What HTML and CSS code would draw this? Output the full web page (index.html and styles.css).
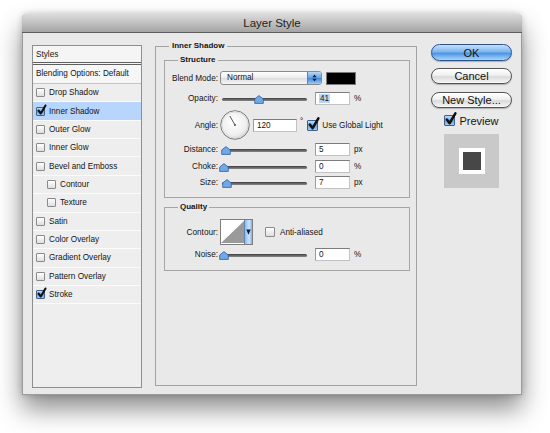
FILE: index.html
```html
<!DOCTYPE html>
<html lang="en">

<head>
    <meta charset="UTF-8">
    <title>Layer Style</title>
    <link rel="stylesheet" href="styles.css">
</head>

<body>
    <div class="window">
        <div class="titlebar">Layer Style</div>
        <div class="content">

            <div class="styles">
                <div class="styles-head">Styles</div>
                <div class="styles-blend">Blending Options: Default</div>
                <ul class="effects">
                    <li><span class="cb"></span>Drop Shadow</li>
                    <li class="selected"><span class="cb on"><svg viewBox="0 0 9 9"><path d="M1.5 4.5 L3.8 7.5 L8.5 -0.5" /></svg></span>Inner Shadow</li>
                    <li><span class="cb"></span>Outer Glow</li>
                    <li><span class="cb"></span>Inner Glow</li>
                    <li><span class="cb"></span>Bevel and Emboss</li>
                    <li class="sub"><span class="cb"></span>Contour</li>
                    <li class="sub"><span class="cb"></span>Texture</li>
                    <li><span class="cb"></span>Satin</li>
                    <li><span class="cb"></span>Color Overlay</li>
                    <li><span class="cb"></span>Gradient Overlay</li>
                    <li><span class="cb"></span>Pattern Overlay</li>
                    <li><span class="cb on"><svg viewBox="0 0 9 9"><path d="M1.5 4.5 L3.8 7.5 L8.5 -0.5" /></svg></span>Stroke</li>
                </ul>
            </div>

            <fieldset class="panel">
                <legend>Inner Shadow</legend>

                <fieldset class="group structure">
                    <legend>Structure</legend>

                    <div class="row row-blend">
                        <span class="lbl">Blend Mode:</span>
                        <div class="popup">
                            <span class="popup-text">Normal</span>
                            <span class="popup-arrows">
                                <svg viewBox="0 0 13 14"><path d="M4 6 L6.5 3 L9 6 Z M4 8 L6.5 11 L9 8 Z" /></svg>
                            </span>
                        </div>
                        <span class="swatch"></span>
                    </div>

                    <div class="row row-opacity">
                        <span class="lbl">Opacity:</span>
                        <div class="slider"><svg class="knob" style="left:41%" viewBox="0 0 10 9"><path d="M5 0.6 L9.3 4 V8.4 H0.7 V4 Z" /></svg></div>
                        <span class="field"><span class="sel">41</span></span>
                        <span class="unit">%</span>
                    </div>

                    <div class="row row-angle">
                        <span class="lbl">Angle:</span>
                        <svg class="dial" viewBox="0 0 30 30">
                            <defs>
                                <radialGradient id="dialfill" cx="45%" cy="40%" r="65%">
                                    <stop offset="0" stop-color="#ffffff" />
                                    <stop offset="0.7" stop-color="#eeeeee" />
                                    <stop offset="1" stop-color="#c9c9c9" />
                                </radialGradient>
                            </defs>
                            <circle cx="15" cy="15" r="14.3" fill="url(#dialfill)" stroke="#7c7c7c" />
                            <circle cx="15" cy="15" r="13" fill="none" stroke="#dcdcdc" />
                            <line x1="15" y1="15" x2="9.8" y2="6" stroke="#555" stroke-width="1" />
                            <circle cx="15" cy="15" r="1" fill="#555" />
                        </svg>
                        <span class="field field-wide">120</span>
                        <span class="deg">°</span>
                        <span class="cb cb-big on"><svg viewBox="0 0 9 9"><path d="M1.5 4.5 L3.8 7.5 L8.5 -0.5" /></svg></span>
                        <span class="cb-text">Use Global Light</span>
                    </div>

                    <div class="row row-distance">
                        <span class="lbl">Distance:</span>
                        <div class="slider"><svg class="knob" style="left:2%" viewBox="0 0 10 9"><path d="M5 0.6 L9.3 4 V8.4 H0.7 V4 Z" /></svg></div>
                        <span class="field">5</span>
                        <span class="unit">px</span>
                    </div>

                    <div class="row row-choke">
                        <span class="lbl">Choke:</span>
                        <div class="slider"><svg class="knob" style="left:0%" viewBox="0 0 10 9"><path d="M5 0.6 L9.3 4 V8.4 H0.7 V4 Z" /></svg></div>
                        <span class="field">0</span>
                        <span class="unit">%</span>
                    </div>

                    <div class="row row-size">
                        <span class="lbl">Size:</span>
                        <div class="slider"><svg class="knob" style="left:4%" viewBox="0 0 10 9"><path d="M5 0.6 L9.3 4 V8.4 H0.7 V4 Z" /></svg></div>
                        <span class="field">7</span>
                        <span class="unit">px</span>
                    </div>
                </fieldset>

                <fieldset class="group quality">
                    <legend>Quality</legend>

                    <div class="row row-contour">
                        <span class="lbl">Contour:</span>
                        <div class="curve">
                            <svg class="curve-pic" viewBox="0 0 25 24"><polygon points="0,24 25,0 25,24" /></svg>
                            <span class="curve-arrow"><svg viewBox="0 0 8 24"><path d="M1.5 9 H6.5 L4 15 Z" /></svg></span>
                        </div>
                        <span class="cb cb-aa"></span>
                        <span class="cb-text">Anti-aliased</span>
                    </div>

                    <div class="row row-noise">
                        <span class="lbl">Noise:</span>
                        <div class="slider"><svg class="knob" style="left:0%" viewBox="0 0 10 9"><path d="M5 0.6 L9.3 4 V8.4 H0.7 V4 Z" /></svg></div>
                        <span class="field">0</span>
                        <span class="unit">%</span>
                    </div>
                </fieldset>
            </fieldset>

            <div class="actions">
                <button type="button" class="btn btn-ok">OK</button>
                <button type="button" class="btn btn-cancel">Cancel</button>
                <button type="button" class="btn btn-new">New Style...</button>
                <label class="preview-check"><span class="cb cb-big on"><svg viewBox="0 0 9 9"><path d="M1.5 4.5 L3.8 7.5 L8.5 -0.5" /></svg></span>Preview</label>
                <div class="preview">
                    <div class="preview-tile"><div class="preview-core"></div></div>
                </div>
            </div>

        </div>
    </div>
</body>

</html>
```

FILE: styles.css
```css
html {
    background-color: #ffffff;
}

body {
    margin: 0;
    padding-bottom: 40px;
    min-height: 433px;
    box-sizing: border-box;
    font-family: "Liberation Sans", Arial, sans-serif;
    font-size: 8.2px;
    color: #141414;
}

.window {
    margin: 14px 0 0 22px;
    width: 500px;
    height: 381px;
    box-sizing: border-box;
    border: 1px solid #9a9a9a;
    border-top: none;
    border-radius: 5px 5px 0 0;
    background-color: #e9e9e9;
    box-shadow: 0 14px 26px rgba(0, 0, 0, 0.45), 0 0 6px rgba(0, 0, 0, 0.2);
}

.titlebar {
    height: 18px;
    line-height: 18px;
    margin: 0 -1px;
    text-align: center;
    font-size: 11.5px;
    color: #222;
    border-radius: 5px 5px 0 0;
    border-bottom: 1px solid #5e5e5e;
    background: linear-gradient(#dcdcdc, #bdbdbd 55%, #a4a4a4);
}

.content {
    display: flex;
    align-items: flex-start;
    padding: 0 9px;
}

/* left list of styles */

.styles {
    margin-top: 12px;
    width: 110px;
    height: 343px;
    box-sizing: border-box;
    border: 1px solid #8e8e8e;
    background-color: #eeeeee;
}

.styles-head {
    height: 16px;
    line-height: 17px;
    padding-left: 3px;
    background-color: #f5f5f5;
    border-bottom: 3px double #5f5f5f;
}

.styles-blend {
    height: 18px;
    line-height: 18px;
    padding-left: 3px;
    background-color: #f6f6f6;
    border-bottom: 1px solid #c4c4c4;
}

.effects {
    list-style: none;
    margin: 0;
    padding: 0;
}

.effects li {
    display: flex;
    align-items: center;
    height: 17.36px;
    padding-left: 3px;
    border-bottom: 1px solid #fbfbfb;
}

.effects li.sub {
    padding-left: 14px;
}

.effects li.selected {
    background-color: #b7d5fd;
}

.cb {
    flex: none;
    position: relative;
    width: 9px;
    height: 9px;
    margin-right: 4px;
    box-sizing: border-box;
    border: 1px solid #8a8a8a;
    border-radius: 1px;
    background: linear-gradient(#ffffff, #dedede);
}

.cb.on {
    border-color: #3f5f8c;
    background: linear-gradient(#c4ddf7, #6aa5e4 55%, #9fcaf5);
}

.cb svg {
    position: absolute;
    left: 0;
    top: -2px;
    width: 9px;
    height: 9px;
    overflow: visible;
}

.cb svg path {
    fill: none;
    stroke: #111;
    stroke-width: 2.1;
    stroke-linecap: round;
    stroke-linejoin: round;
}

.cb-big {
    width: 11px;
    height: 11px;
}

.cb-big svg {
    width: 11px;
    height: 11px;
}

/* middle panel */

.panel {
    margin: 8px 0 0 13px;
    width: 262px;
    height: 345px;
    box-sizing: border-box;
    padding: 4px 6px 0 8px;
    border: 1px solid #a3a3a3;
}

.panel > legend {
    margin-left: 5px;
    padding: 0 3px;
    font-weight: bold;
    font-size: 8px;
    line-height: 10px;
}

.group {
    margin: 0;
    padding: 0 0 8px 0;
    border: 1px solid #a6a6a6;
}

.group > legend {
    margin-left: 13px;
    padding: 0 2px;
    font-weight: bold;
    font-size: 8px;
    line-height: 10px;
}

.quality {
    margin-top: 4px;
    padding-bottom: 9px;
}

.row {
    display: flex;
    align-items: center;
}

.lbl {
    flex: none;
    width: 53px;
    margin-right: 4px;
    text-align: right;
    white-space: nowrap;
}

.row-blend { height: 14px; margin-top: 6px; }
.row-opacity { height: 13px; margin-top: 7px; }
.row-angle { height: 30px; margin-top: 5px; }
.row-distance { height: 13px; margin-top: 3px; }
.row-choke { height: 13px; margin-top: 4px; }
.row-size { height: 13px; margin-top: 3px; }
.row-contour { height: 26px; margin-top: 7px; }
.row-noise { height: 13px; margin-top: 3px; }

.popup {
    display: flex;
    width: 102px;
    height: 14px;
    box-sizing: border-box;
    margin-left: -2px;
    border: 1px solid #8a8a8a;
    border-radius: 3px;
    background: linear-gradient(#ffffff, #ececec 50%, #dcdcdc 52%, #f6f6f6);
}

.popup-text {
    flex: 1;
    padding-left: 6px;
    line-height: 12px;
}

.popup-arrows {
    width: 13px;
    border-left: 1px solid #5d82b6;
    border-radius: 0 2px 2px 0;
    background: linear-gradient(#bcd9f6, #5f9fe6 50%, #3f86dc 52%, #9ccbf6);
}

.popup-arrows svg {
    display: block;
    width: 13px;
    height: 12px;
}

.popup-arrows path {
    fill: #10233f;
}

.swatch {
    width: 28px;
    height: 11px;
    margin-left: 4px;
    background-color: #000;
    border: 1px solid #7a7a7a;
}

.slider {
    position: relative;
    flex: none;
    width: 85px;
    height: 12px;
    margin-right: 8px;
}

.slider::before {
    content: "";
    position: absolute;
    left: 0;
    right: 0;
    top: 5px;
    height: 3px;
    border-radius: 2px;
    background: linear-gradient(#3e3e3e, #8a8a8a);
}

.knob {
    position: absolute;
    top: 2px;
    width: 10px;
    height: 9px;
    margin-left: -3px;
}

.knob path {
    fill: #6fa9ea;
    stroke: #2f5f9e;
    stroke-width: 0.8;
    stroke-linejoin: round;
}

.field {
    flex: none;
    width: 35px;
    height: 13px;
    box-sizing: border-box;
    padding-left: 3px;
    line-height: 11px;
    background-color: #fff;
    border: 1px solid;
    border-color: #7c7c7c #c2c2c2 #c2c2c2 #9c9c9c;
}

.sel {
    background-color: #b5d5fd;
    padding: 0 1px;
}

.unit {
    margin-left: 4px;
}

.dial {
    flex: none;
    width: 30px;
    height: 30px;
    margin-left: -2px;
}

.field-wide {
    width: 44px;
    margin-left: 3px;
}

.deg {
    align-self: flex-start;
    margin: 7px 0 0 3px;
}

.row-angle .cb {
    margin-left: 4px;
}

.cb-text {
    white-space: nowrap;
}

.curve {
    display: flex;
    width: 33px;
    height: 26px;
    box-sizing: border-box;
    margin-left: -2px;
    border: 1px solid #7e7e7e;
    background-color: #fff;
}

.curve-pic {
    width: 24px;
    height: 24px;
}

.curve-pic polygon {
    fill: #9a9a9a;
}

.curve-arrow {
    width: 7px;
    border-left: 1px solid #5d82b6;
    background: linear-gradient(90deg, #8bbcf0, #cfe5fb 60%, #7fb3ec);
}

.curve-arrow svg {
    display: block;
    width: 7px;
    height: 24px;
}

.curve-arrow path {
    fill: #0d1a2e;
}

.cb-aa {
    width: 10px;
    height: 10px;
    margin-left: 12px;
    margin-right: 5px;
}

/* right column */

.actions {
    display: flex;
    flex-direction: column;
    align-items: center;
    width: 81px;
    margin: 11px 0 0 14px;
}

.btn {
    width: 81px;
    height: 16px;
    padding: 0;
    font-family: "Liberation Sans", Arial, sans-serif;
    font-size: 11px;
    color: #111;
    border: 1px solid #555;
    border-radius: 9px;
    background: linear-gradient(#ffffff, #f0f0f0 45%, #dadada 55%, #f7f7f7);
    box-shadow: 0 1px 1px rgba(0, 0, 0, 0.25);
}

.btn-ok {
    height: 17px;
    border-color: #2b528c;
    background: linear-gradient(#c5e0fb, #7fb6ef 45%, #4c96e4 55%, #a8d5fb);
}

.btn-cancel {
    margin-top: 7px;
}

.btn-new {
    margin-top: 8px;
}

.preview-check {
    display: flex;
    align-items: center;
    height: 11px;
    margin-top: 7px;
    font-size: 11px;
}

.preview-check .cb {
    margin-right: 4px;
}

.preview {
    display: flex;
    align-items: center;
    justify-content: center;
    width: 55px;
    height: 54px;
    margin-top: 8px;
    background-color: #c9c9c9;
}

.preview-tile {
    padding: 4px;
    background-color: #fff;
}

.preview-core {
    width: 18px;
    height: 18px;
    background-color: #474747;
}
```
